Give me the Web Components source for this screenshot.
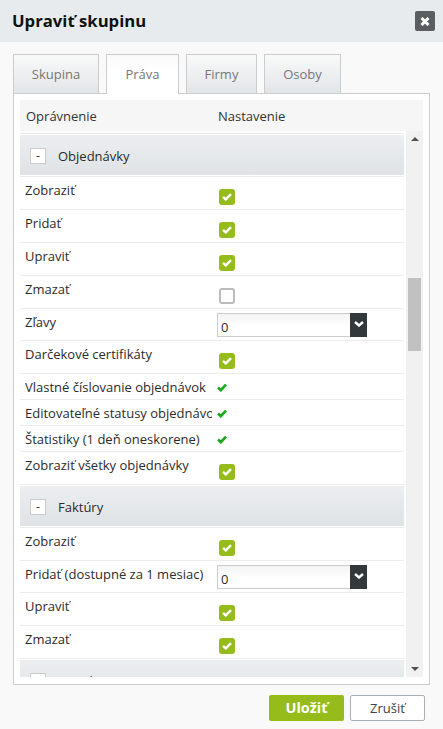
<!DOCTYPE html>
<html lang="sk">
<head>
<meta charset="utf-8">
<title>Upraviť skupinu</title>
<style>
  html, body { margin: 0; padding: 0; height: 729px; overflow: hidden; background: #f9f9f9; }
  body { font: 13px/18px "Open Sans", "Liberation Sans", sans-serif; color: #2b2b2b; }
</style>
</head>
<body>
<edit-dialog heading="Upraviť skupinu">
  <tab-item slot="tabs" label="Skupina" style="width:86px"></tab-item>
  <tab-item slot="tabs" label="Práva" active style="width:73px"></tab-item>
  <tab-item slot="tabs" label="Firmy" style="width:71px"></tab-item>
  <tab-item slot="tabs" label="Osoby" style="width:77px"></tab-item>

  <perm-table>
    <perm-group label="Objednávky"></perm-group>
    <perm-row label="Zobraziť"><check-box checked></check-box></perm-row>
    <perm-row label="Pridať"><check-box checked></check-box></perm-row>
    <perm-row label="Upraviť"><check-box checked></check-box></perm-row>
    <perm-row label="Zmazať"><check-box></check-box></perm-row>
    <perm-row label="Zľavy"><drop-select value="0"></drop-select></perm-row>
    <perm-row label="Darčekové certifikáty"><check-box checked></check-box></perm-row>
    <perm-row label="Vlastné číslovanie objednávok"><tick-mark></tick-mark></perm-row>
    <perm-row label="Editovateľné statusy objednávok"><tick-mark></tick-mark></perm-row>
    <perm-row label="Štatistiky (1 deň oneskorene)"><tick-mark></tick-mark></perm-row>
    <perm-row label="Zobraziť všetky objednávky"><check-box checked></check-box></perm-row>
    <perm-group label="Faktúry"></perm-group>
    <perm-row label="Zobraziť"><check-box checked></check-box></perm-row>
    <perm-row label="Pridať (dostupné za 1 mesiac)"><drop-select value="0"></drop-select></perm-row>
    <perm-row label="Upraviť"><check-box checked></check-box></perm-row>
    <perm-row label="Zmazať"><check-box checked></check-box></perm-row>
    <perm-group label="Ponuky"></perm-group>
  </perm-table>

  <action-button slot="actions" primary>Uložiť</action-button>
  <action-button slot="actions">Zrušiť</action-button>
</edit-dialog>

<script>
class EditDialog extends HTMLElement {
  connectedCallback() {
    const root = this.attachShadow({ mode: 'open' })
    root.innerHTML = `
      <style>
        :host { display: block; height: 729px; background: #f9f9f9; }
        header {
          display: flex;
          align-items: center;
          justify-content: space-between;
          height: 42px;
          padding: 0 8px 0 12px;
          background: #e8ebee;
        }
        h1 { margin: 0; font-size: 16.7px; line-height: 22px; font-weight: 700; color: #111; }
        .close {
          display: flex;
          width: 20px;
          height: 20px;
          align-items: center;
          justify-content: center;
          background: #5b5e61;
          border-radius: 2px;
        }
        .tabs { display: flex; gap: 7px; padding: 12px 0 0 13px; height: 39px; }
        .panel {
          box-sizing: border-box;
          height: 592px;
          margin: 0 13px;
          padding: 6px;
          background: #fff;
          border: 1px solid #ccc;
        }
        .actions { display: flex; justify-content: flex-end; gap: 6px; padding: 10px 18px 0 0; }
      </style>
      <header>
        <h1>${this.getAttribute('heading')}</h1>
        <div class="close">
          <svg width="10" height="9" viewBox="0 0 10 9"><path d="M1.5 1l7 7M8.5 1l-7 7" stroke="#fff" stroke-width="3" fill="none"/></svg>
        </div>
      </header>
      <div class="tabs"><slot name="tabs"></slot></div>
      <div class="panel"><slot></slot></div>
      <div class="actions"><slot name="actions"></slot></div>`
  }
}

class TabItem extends HTMLElement {
  connectedCallback() {
    const root = this.attachShadow({ mode: 'open' })
    root.innerHTML = `
      <style>
        :host {
          display: flex;
          box-sizing: border-box;
          height: 39px;
          align-items: center;
          justify-content: center;
          padding-bottom: 1px;
          font-size: 13px;
          color: #777;
          border: 1px solid #ccc;
          border-bottom: 0;
          background: linear-gradient(#f9f9f9, #e2e5e8);
        }
        :host([active]) {
          height: 40px;
          padding-bottom: 2px;
          position: relative;
          background: linear-gradient(#f9f9f9, #fff 40%);
        }
      </style>
      ${this.getAttribute('label')}`
  }
}

class PermTable extends HTMLElement {
  connectedCallback() {
    const root = this.attachShadow({ mode: 'open' })
    root.innerHTML = `
      <style>
        :host { display: block; }
        .head {
          display: flex;
          height: 31px;
          align-items: center;
          background: #f6f6f6;
          color: #333;
        }
        .head span:first-child { width: 198px; padding-left: 6px; box-sizing: border-box; }
        .body { display: flex; height: 546px; }
        .rows { width: 385px; height: 546px; overflow: hidden; padding-top: 2px; box-sizing: border-box; }
        .bar {
          display: flex;
          flex-direction: column;
          align-items: center;
          box-sizing: border-box;
          width: 17px;
          margin-left: 2px;
          padding: 6px 0;
          background: #f1f1f1;
        }
        .thumb { width: 13px; height: 73px; margin-top: 137px; margin-bottom: auto; background: #c1c1c1; }
        .up, .down { width: 0; height: 0; border-left: 4px solid transparent; border-right: 4px solid transparent; }
        .up { border-bottom: 4px solid #505050; }
        .down { border-top: 4px solid #505050; }
      </style>
      <div class="head"><span>Oprávnenie</span><span>Nastavenie</span></div>
      <div class="body">
        <div class="rows"><slot></slot></div>
        <div class="bar">
          <div class="up"></div>
          <div class="thumb"></div>
          <div class="down"></div>
        </div>
      </div>`
  }
}

class PermGroup extends HTMLElement {
  connectedCallback() {
    const root = this.attachShadow({ mode: 'open' })
    root.innerHTML = `
      <style>
        :host {
          display: block;
          padding: 1px 0;
          border-bottom: 1px solid #ececec;
          background: #fff;
        }
        :host(:first-child) { border-top: 1px solid #ececec; }
        .bar {
          display: flex;
          box-sizing: border-box;
          align-items: center;
          height: 40px;
          padding: 2px 0 0 10px;
          gap: 12px;
          background: linear-gradient(#eceef0, #dfe3e6);
        }
        .toggle {
          box-sizing: border-box;
          display: flex;
          align-items: center;
          justify-content: center;
          width: 16px;
          height: 16px;
          background: #fff;
          border: 1px solid #ccc;
          font-size: 12px;
          line-height: 12px;
        }
      </style>
      <div class="bar"><span class="toggle">-</span><span>${this.getAttribute('label')}</span></div>`
  }
}

class PermRow extends HTMLElement {
  connectedCallback() {
    const root = this.attachShadow({ mode: 'open' })
    root.innerHTML = `
      <style>
        :host {
          display: flex;
          width: 384px;
          border-bottom: 1px solid #ececec;
        }
        .label {
          box-sizing: border-box;
          width: 187px;
          margin: 0 5px;
          padding: 4px 0 3px;
          overflow: hidden;
          white-space: nowrap;
        }
      </style>
      <div class="label">${this.getAttribute('label')}</div>
      <slot></slot>`
  }
}

class CheckBox extends HTMLElement {
  connectedCallback() {
    const root = this.attachShadow({ mode: 'open' })
    const checked = this.hasAttribute('checked')
    root.innerHTML = `
      <style>
        :host {
          display: flex;
          box-sizing: border-box;
          width: 16px;
          height: 16px;
          margin: 12px 0 4px 2px;
          align-items: center;
          justify-content: center;
          border-radius: 3px;
          background: #fff;
          border: 2px solid #bbb;
        }
        :host([checked]) { background: #95bc1a; border: 0; }
      </style>
      ${checked ? `<svg width="10" height="8" viewBox="0 0 10 8"><path d="M1 3.8l2.8 2.6L9 1.2" stroke="#fff" stroke-width="2.4" fill="none"/></svg>` : ''}`
  }
}

class TickMark extends HTMLElement {
  connectedCallback() {
    const root = this.attachShadow({ mode: 'open' })
    root.innerHTML = `
      <style>
        :host { display: block; height: 9px; margin: 9px 0 0 0; line-height: 0; }
      </style>
      <svg width="10" height="9" viewBox="0 0 10 9"><path d="M1 4.6l2.8 2.6L9 1.6" stroke="#1ba81b" stroke-width="2.7" fill="none"/></svg>`
  }
}

class DropSelect extends HTMLElement {
  connectedCallback() {
    const root = this.attachShadow({ mode: 'open' })
    root.innerHTML = `
      <style>
        :host {
          display: flex;
          box-sizing: border-box;
          width: 150px;
          height: 24px;
          margin: 4px 0 3px 0;
          border: 1px solid #ccc;
          border-right: 0;
          background: linear-gradient(#f4f4f4, #fff 60%);
        }
        .value { flex: 1; padding: 4px 0 0 3px; }
        .arrow {
          display: flex;
          width: 17px;
          margin: -1px 0;
          padding-bottom: 2px;
          box-sizing: border-box;
          align-items: center;
          justify-content: center;
          background: #33383b;
        }
      </style>
      <span class="value">${this.getAttribute('value')}</span>
      <span class="arrow"><svg width="10" height="6" viewBox="0 0 10 6"><path d="M1 1l4 3.5L9 1" stroke="#fff" stroke-width="2.4" fill="none"/></svg></span>`
  }
}

class ActionButton extends HTMLElement {
  connectedCallback() {
    const root = this.attachShadow({ mode: 'open' })
    root.innerHTML = `
      <style>
        :host {
          display: flex;
          box-sizing: border-box;
          width: 75px;
          height: 26px;
          align-items: center;
          justify-content: center;
          border-radius: 2px;
          background: #fff;
          border: 1px solid #a9aebb;
          font-size: 13px;
          color: #444;
        }
        :host([primary]) { background: #95bc1a; border: 0; color: #fff; font-weight: 700; font-size: 14.5px; }
      </style>
      <slot></slot>`
  }
}

customElements.define('edit-dialog', EditDialog)
customElements.define('tab-item', TabItem)
customElements.define('perm-table', PermTable)
customElements.define('perm-group', PermGroup)
customElements.define('perm-row', PermRow)
customElements.define('check-box', CheckBox)
customElements.define('tick-mark', TickMark)
customElements.define('drop-select', DropSelect)
customElements.define('action-button', ActionButton)
</script>
</body>
</html>
